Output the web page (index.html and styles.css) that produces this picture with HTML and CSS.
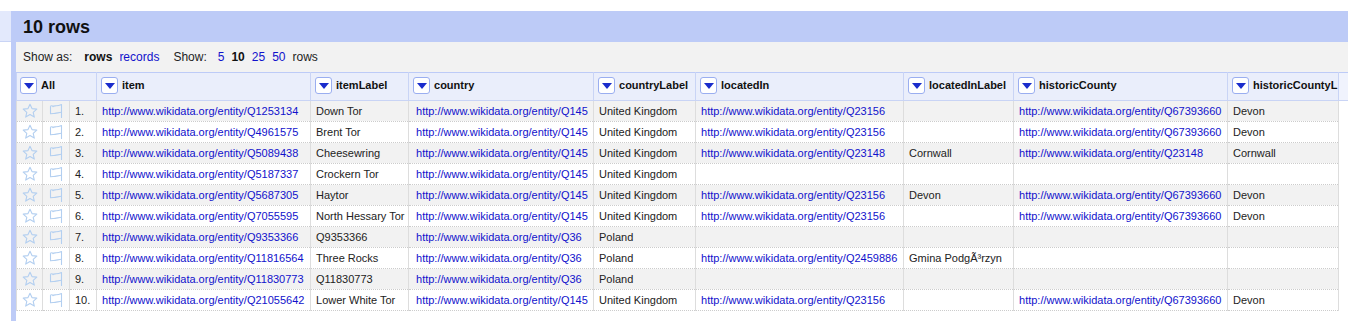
FILE: index.html
```html
<!DOCTYPE html>
<html lang="en">
<head>
    <meta charset="UTF-8">
    <title>10 rows</title>
    <link rel="stylesheet" href="styles.css">
</head>
<body>

    <div class="layout">
        <div class="left-panel"><div class="left-tab"></div></div>

        <div class="view">
            <div class="view-title">10 rows</div>
            <div class="view-body">
                <div class="show-bar">
                    <span class="label">Show as:</span>
                    <b>rows</b>
                    <a href="#">records</a>
                    <span class="spacer">Show:</span>
                    <a href="#">5</a>
                    <b>10</b>
                    <a href="#">25</a>
                    <a href="#">50</a>
                    <span>rows</span>
                </div>

                <table class="data-table">
                    <colgroup>
                        <col style="width:26px">
                        <col style="width:27px">
                        <col style="width:27px">
                        <col style="width:214px">
                        <col style="width:98px">
                        <col style="width:185px">
                        <col style="width:102px">
                        <col style="width:208px">
                        <col style="width:110px">
                        <col style="width:214px">
                        <col style="width:111px">
                        <col style="width:10px">
                    </colgroup>
                    <thead>
                        <tr>
                            <th colspan="3" class="all"><span class="dropdown"></span>All</th>
                            <th><span class="dropdown"></span>item</th>
                            <th><span class="dropdown"></span>itemLabel</th>
                            <th><span class="dropdown"></span>country</th>
                            <th><span class="dropdown"></span>countryLabel</th>
                            <th><span class="dropdown"></span>locatedIn</th>
                            <th><span class="dropdown"></span>locatedInLabel</th>
                            <th><span class="dropdown"></span>historicCounty</th>
                            <th><span class="dropdown"></span>historicCountyL</th>
                            <th class="filler"></th>
                        </tr>
                    </thead>
                    <tbody id="rows"></tbody>
                </table>
            </div>
        </div>
    </div>

    <script>
        var rows = [
            ['Q1253134', 'Down Tor', 'Q145', 'United Kingdom', 'Q23156', '', 'Q67393660', 'Devon'],
            ['Q4961575', 'Brent Tor', 'Q145', 'United Kingdom', 'Q23156', '', 'Q67393660', 'Devon'],
            ['Q5089438', 'Cheesewring', 'Q145', 'United Kingdom', 'Q23148', 'Cornwall', 'Q23148', 'Cornwall'],
            ['Q5187337', 'Crockern Tor', 'Q145', 'United Kingdom', '', '', '', ''],
            ['Q5687305', 'Haytor', 'Q145', 'United Kingdom', 'Q23156', 'Devon', 'Q67393660', 'Devon'],
            ['Q7055595', 'North Hessary Tor', 'Q145', 'United Kingdom', 'Q23156', '', 'Q67393660', 'Devon'],
            ['Q9353366', 'Q9353366', 'Q36', 'Poland', '', '', '', ''],
            ['Q11816564', 'Three Rocks', 'Q36', 'Poland', 'Q2459886', 'Gmina PodgÃ³rzyn', '', ''],
            ['Q11830773', 'Q11830773', 'Q36', 'Poland', '', '', '', ''],
            ['Q21055642', 'Lower White Tor', 'Q145', 'United Kingdom', 'Q23156', '', 'Q67393660', 'Devon']
        ];

        var base = 'http://www.wikidata.org/entity/';
        var star = '<svg width="16" height="16" viewBox="0 0 16 16"><path d="M8 1.2l2 4.4 4.8.5-3.6 3.2 1.1 4.8L8 11.6l-4.3 2.5 1.1-4.8-3.6-3.2 4.8-.5z" fill="none" stroke="#b3cff0" stroke-width="1.1" stroke-linejoin="round"/></svg>';
        // flag with its pole on the right, as in the original
        var flag = '<svg width="16" height="16" viewBox="0 0 16 16"><path d="M2.5 3.2c1-.9 2.2-.5 2.4.4.6-1 1.8-.7 3.3-.8 1.8-.1 3.5-.6 5.3-1.3v13" fill="none" stroke="#b3cff0" stroke-width="1.1" stroke-linejoin="round" stroke-linecap="round"/><path d="M2.5 3.2v7.6c1.6-.6 3-.2 4.6-.4 2.2-.3 4-1 6.4-1.2" fill="none" stroke="#b3cff0" stroke-width="1.1" stroke-linejoin="round"/></svg>';

        function link(q) {
            return q ? '<a href="#">' + base + q + '</a>' : '';
        }

        var html = '';
        rows.forEach(function(r, i) {
            html += '<tr class="' + (i % 2 ? 'even' : 'odd') + '">' +
                '<td class="icon">' + star + '</td>' +
                '<td class="icon">' + flag + '</td>' +
                '<td>' + (i + 1) + '.</td>' +
                '<td>' + link(r[0]) + '</td>' +
                '<td>' + r[1] + '</td>' +
                '<td class="wide">' + link(r[2]) + '</td>' +
                '<td>' + r[3] + '</td>' +
                '<td>' + link(r[4]) + '</td>' +
                '<td>' + r[5] + '</td>' +
                '<td>' + link(r[6]) + '</td>' +
                '<td>' + r[7] + '</td>' +
                '<td class="filler"></td>' +
                '</tr>';
        });
        document.getElementById('rows').innerHTML = html;
    </script>
</body>
</html>
```

FILE: styles.css
```css
body {
    font-family: "Liberation Sans", Arial, sans-serif;
    color: #222;
    margin: 0;
    padding: 11px 0 0 0;
    background-color: #fff;
}

a {
    color: #1111cc;
    text-decoration: none;
}

.layout {
    display: flex;
    height: 310px;
}

.left-panel {
    width: 11px;
    flex: none;
}

.left-tab {
    height: 30px;
    background-color: #e3e9fc;
    border-bottom: 1px solid #c9d4f5;
}

.view {
    flex: 1;
    display: flex;
    flex-direction: column;
    min-width: 0;
}

.view-title {
    height: 31px;
    line-height: 32px;
    padding-left: 12px;
    background-color: #bdcbf7;
    font-size: 18px;
    font-weight: bold;
    color: #111;
}

.view-body {
    flex: 1;
    border-left: 5px solid #bdcbf7;
    overflow: hidden;
}

.show-bar {
    display: flex;
    align-items: center;
    gap: 0 7px;
    height: 30px;
    padding-left: 7px;
    background-color: #f2f2f2;
    font-size: 12px;
}

.show-bar .label {
    margin-right: 5px;
}

.show-bar b {
    color: #111;
}

.show-bar .spacer {
    margin-left: 7px;
    margin-right: 4px;
}

.data-table {
    table-layout: fixed;
    border-collapse: collapse;
    width: 1332px;
    font-size: 11px;
}

.data-table th {
    height: 27px;
    padding: 0 0 0 4px;
    background-color: #eaeefb;
    border-top: 1px solid #bdcbf7;
    border-bottom: 1px solid #c9d4f5;
    border-left: 1px solid #c9d4f5;
    border-right: 1px solid #c9d4f5;
    text-align: left;
    font-weight: bold;
    white-space: nowrap;
    overflow: hidden;
    color: #111;
}

.data-table th.all {
    padding-left: 3px;
}

.data-table th.filler {
    background-color: #f0f3fd;
    border-right: none;
}

.dropdown {
    display: inline-block;
    vertical-align: middle;
    width: 15px;
    height: 15px;
    margin: -2px 4px 0 0;
    background-color: #fff;
    border: 1px solid #9aaef0;
    border-radius: 3px;
    position: relative;
}

.dropdown::after {
    content: "";
    position: absolute;
    left: 3px;
    top: 5px;
    border-left: 5px solid transparent;
    border-right: 5px solid transparent;
    border-top: 6px solid #1a2ccc;
}

.data-table td {
    height: 20px;
    padding: 0 0 0 5px;
    border-left: 1px solid #dddddd;
    border-right: 1px solid #dddddd;
    border-bottom: 1px dotted #cccccc;
    white-space: nowrap;
    overflow: hidden;
}

.data-table td.wide {
    padding-left: 7px;
}

.data-table td.icon {
    padding: 0;
    text-align: center;
}

.data-table td.icon svg {
    display: block;
    margin: 0 auto;
}

.data-table td.filler {
    background-color: #fff;
    border: none;
}

.odd td {
    background-color: #f2f2f2;
}

.even td {
    background-color: #fff;
}
```
